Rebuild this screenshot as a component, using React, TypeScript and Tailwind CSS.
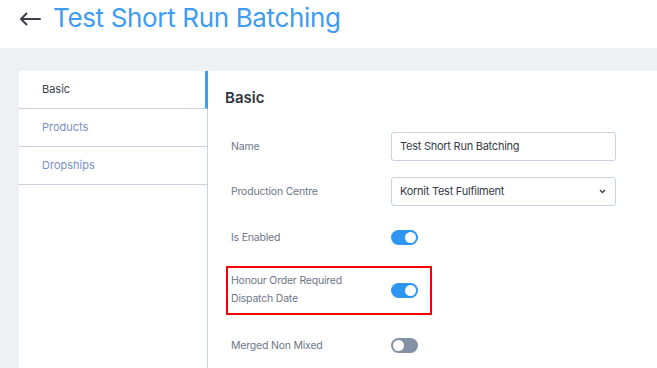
import React from 'react';

function Toggle({ on }: { on: boolean }) {
  return (
    <div
      className={
        on
          ? 'w-[27px] h-[15px] rounded-full bg-[#2f95f3] flex items-center justify-end px-[2px]'
          : 'w-[27px] h-[15px] rounded-full bg-[#8491a5] flex items-center justify-start px-[2px]'
      }
    >
      <div className="w-[11px] h-[11px] rounded-full bg-white" />
    </div>
  );
}

const sideItems = ['Basic', 'Products', 'Dropships'];

export default function App() {
  return (
    <div className="w-[657px] h-[368px] overflow-hidden bg-white font-['Inter',sans-serif]">
      <header className="h-12 flex items-center pl-[19px]">
        <svg width="22" height="14" viewBox="0 0 22 14" fill="none" className="mr-[12px] mt-[-10px]">
          <path d="M21 7H2M7.5 1.5L2 7l5.5 5.5" stroke="#3a3f4a" strokeWidth="2" strokeLinecap="round" strokeLinejoin="round" />
        </svg>
        <h1 className="text-[26px] leading-none text-[#3e9cf3] tracking-[-0.35px] mt-[-12px]">Test Short Run Batching</h1>
      </header>
      <div className="bg-[#eef1f4] h-[320px] pt-[23px] pl-[19px]">
        <div className="flex h-full bg-white">
          <nav className="w-[189px] shrink-0 border-r border-[#c9d3df]">
            {sideItems.map((item, i) => (
              <div
                key={item}
                className={
                  i === 0
                    ? 'h-[38px] flex items-center pl-[23px] text-[11px] text-[#3b404b] border-b border-[#c9d3df] border-r-[3px] border-r-[#3e9cf3] mr-[-1px]'
                    : 'h-[38px] flex items-center pl-[23px] text-[11px] text-[#7b90c7] border-b border-[#c9d3df]'
                }
              >
                {item}
              </div>
            ))}
          </nav>
          <main className="flex-1 pl-[17px] pt-[17px]">
            <h2 className="h-5 flex items-center text-[15px] font-semibold text-[#2f3542]">Basic</h2>
            <div className="pl-[6px]">
              <div className="mt-[24px] h-[29px] flex items-center">
                <label className="w-[160px] text-[10.5px] tracking-[-0.2px] text-[#6d7788]">Name</label>
                <div className="w-[225px] h-[29px] border border-[#c9d3df] rounded-[3px] flex items-center pl-[8px] text-[11px] tracking-[-0.25px] text-[#353b47]">
                  Test Short Run Batching
                </div>
              </div>
              <div className="mt-[16px] h-[29px] flex items-center">
                <label className="w-[160px] text-[10.5px] tracking-[-0.2px] text-[#6d7788]">Production Centre</label>
                <div className="w-[225px] h-[29px] border border-[#c9d3df] rounded-[3px] flex items-center justify-between pl-[8px] pr-[9px] text-[11px] tracking-[-0.25px] text-[#353b47]">
                  <span>Kornit Test Fulfilment</span>
                  <svg width="7" height="5" viewBox="0 0 7 5" fill="none">
                    <path d="M1 1l2.5 2.5L6 1" stroke="#3a3f4a" strokeWidth="1.3" />
                  </svg>
                </div>
              </div>
              <div className="mt-[17px] h-[29px] flex items-center">
                <label className="w-[160px] text-[10.5px] tracking-[-0.2px] text-[#6d7788]">Is Enabled</label>
                <Toggle on />
              </div>
              <div className="relative mt-[20px] h-[36px] flex items-center">
                <div className="absolute left-[-5px] top-[-6px] w-[206px] h-[49px] border-2 border-[#f50000]" />
                <label className="w-[160px] text-[10.5px] tracking-[-0.2px] leading-[18px] text-[#6d7788]">
                  Honour Order Required
                  <br />
                  Dispatch Date
                </label>
                <Toggle on />
              </div>
              <div className="mt-[23px] h-[29px] flex items-center">
                <label className="w-[160px] text-[10.5px] tracking-[-0.2px] text-[#6d7788]">Merged Non Mixed</label>
                <Toggle on={false} />
              </div>
            </div>
          </main>
        </div>
      </div>
    </div>
  );
}
